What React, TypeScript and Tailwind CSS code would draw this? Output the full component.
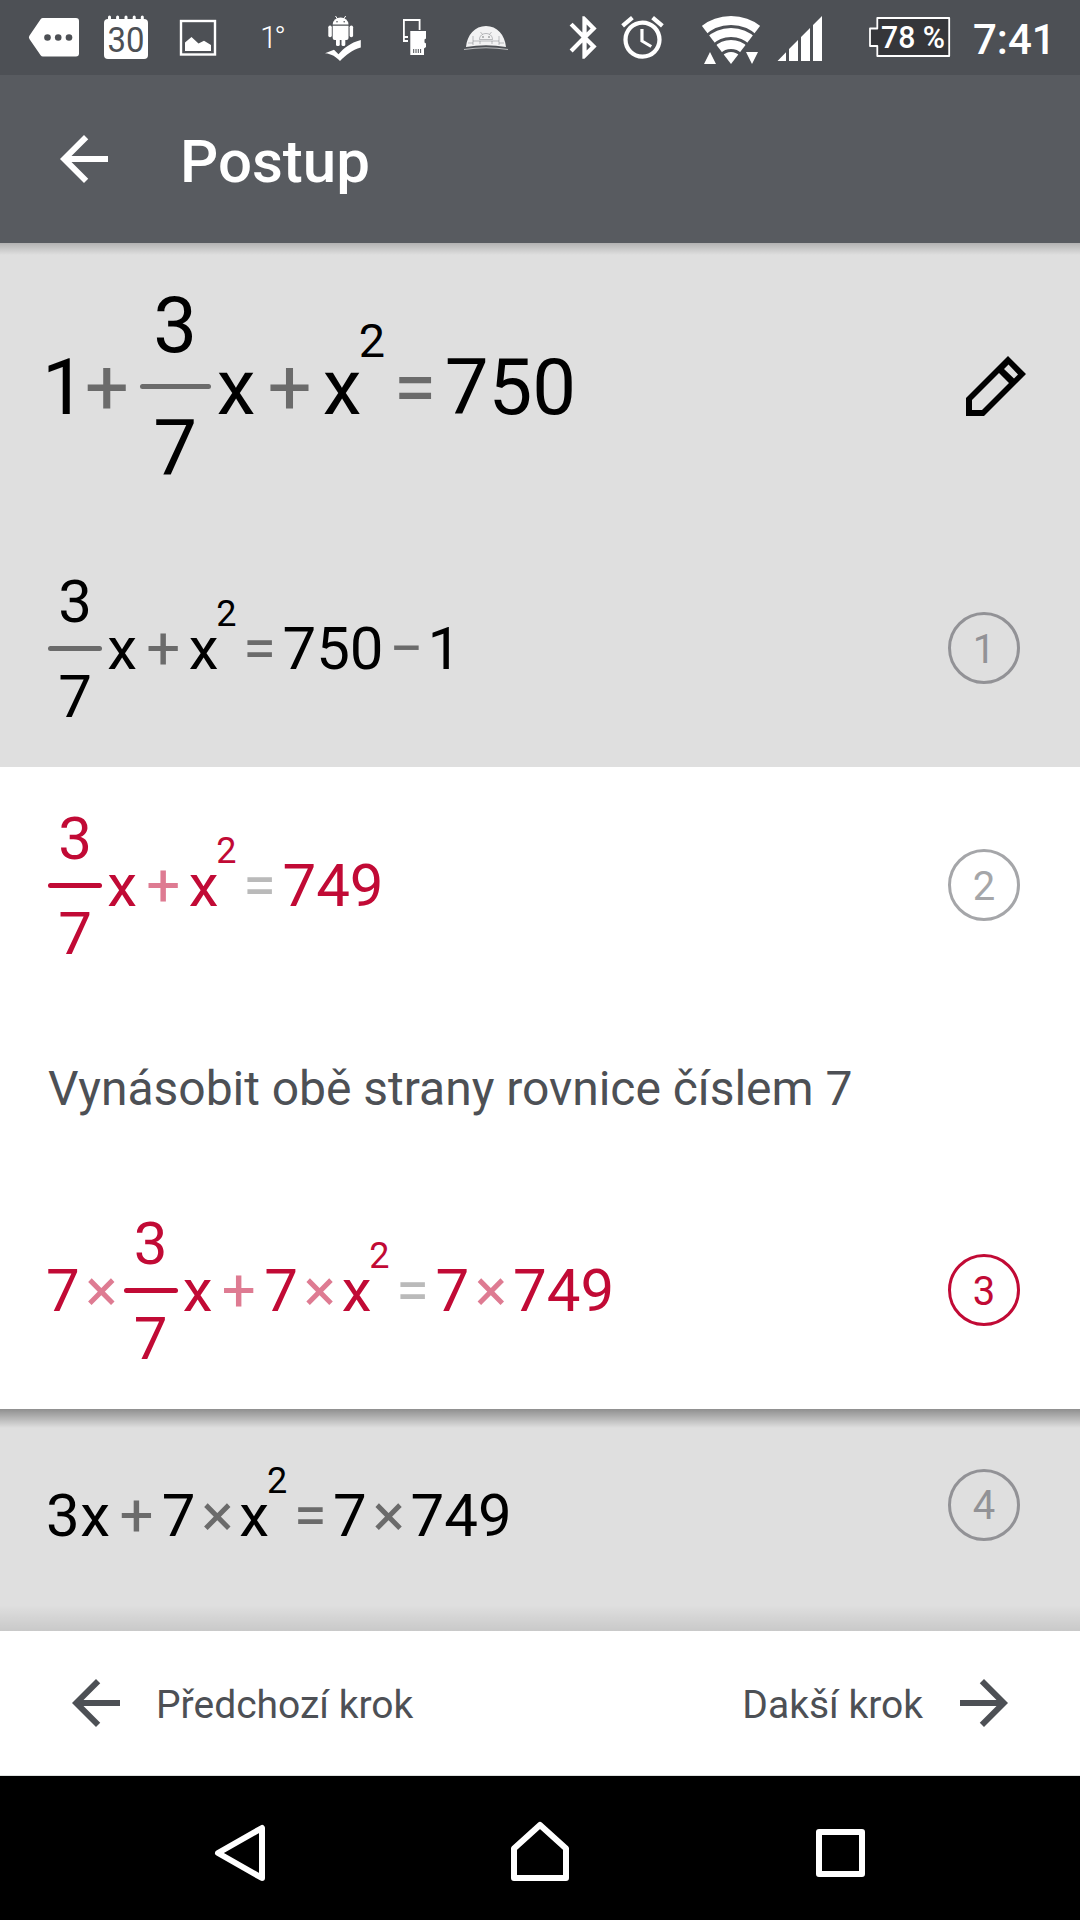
import React from 'react';
import { MdAlarm, MdArrowBack, MdArrowForward, MdBluetooth } from 'react-icons/md';
import { clsx } from 'clsx';

type Tone = 'muted' | 'active';

type Token =
  | { kind: 'text'; value: string; className?: string }
  | { kind: 'op'; value: '+' | '−' | '×' | '=' }
  | { kind: 'frac'; top: string; bottom: string }
  | { kind: 'sup'; value: string };

const EQUATIONS: Record<string, Token[]> = {
  problem: [
    { kind: 'text', value: '1', className: '-mr-[0.17em]' },
    { kind: 'op', value: '+' },
    { kind: 'frac', top: '3', bottom: '7' },
    { kind: 'text', value: 'x', className: 'ml-[0.08em]' },
    { kind: 'op', value: '+' },
    { kind: 'text', value: 'x' },
    { kind: 'sup', value: '2' },
    { kind: 'op', value: '=' },
    { kind: 'text', value: '750' },
  ],
  step1: [
    { kind: 'frac', top: '3', bottom: '7' },
    { kind: 'text', value: 'x', className: 'ml-[0.08em]' },
    { kind: 'op', value: '+' },
    { kind: 'text', value: 'x' },
    { kind: 'sup', value: '2' },
    { kind: 'op', value: '=' },
    { kind: 'text', value: '750' },
    { kind: 'op', value: '−' },
    { kind: 'text', value: '1' },
  ],
  step2: [
    { kind: 'frac', top: '3', bottom: '7' },
    { kind: 'text', value: 'x', className: 'ml-[0.08em]' },
    { kind: 'op', value: '+' },
    { kind: 'text', value: 'x' },
    { kind: 'sup', value: '2' },
    { kind: 'op', value: '=' },
    { kind: 'text', value: '749' },
  ],
  step3: [
    { kind: 'text', value: '7' },
    { kind: 'op', value: '×' },
    { kind: 'frac', top: '3', bottom: '7' },
    { kind: 'text', value: 'x', className: 'ml-[0.08em]' },
    { kind: 'op', value: '+' },
    { kind: 'text', value: '7' },
    { kind: 'op', value: '×' },
    { kind: 'text', value: 'x' },
    { kind: 'sup', value: '2' },
    { kind: 'op', value: '=' },
    { kind: 'text', value: '7' },
    { kind: 'op', value: '×' },
    { kind: 'text', value: '749' },
  ],
  step4: [
    { kind: 'text', value: '3' },
    { kind: 'text', value: 'x', className: 'ml-[0.01em]' },
    { kind: 'op', value: '+' },
    { kind: 'text', value: '7' },
    { kind: 'op', value: '×' },
    { kind: 'text', value: 'x' },
    { kind: 'sup', value: '2' },
    { kind: 'op', value: '=' },
    { kind: 'text', value: '7' },
    { kind: 'op', value: '×' },
    { kind: 'text', value: '749' },
  ],
};

const OP_SPACING = {
  '+': 'ml-[0.155em] mr-[0.14em]',
  '−': 'ml-[0.095em] mr-[0.065em]',
  '×': 'mx-[0.098em]',
  '=': 'mx-[0.108em]',
};

const Equation: React.FC<{ tokens: Token[]; tone?: Tone; className?: string }> = ({
  tokens,
  tone = 'muted',
  className,
}) => {
  const active = tone === 'active';
  return (
    <div
      className={clsx(
        'flex items-center leading-none whitespace-nowrap',
        active ? 'text-[#c10a35]' : 'text-black',
        className,
      )}
    >
      {tokens.map((token, i) => {
        if (token.kind === 'frac') {
          return (
            <div key={i} className="flex w-[0.907em] flex-col items-center gap-[0.2425em]">
              <span className="pt-[0.03em]">{token.top}</span>
              <span
                className={clsx('h-[0.07em] w-full rounded-full', active ? 'bg-[#c10a35]' : 'bg-[#6b6b6b]')}
              />
              <span className="pt-[0.03em]">{token.bottom}</span>
            </div>
          );
        }
        if (token.kind === 'sup') {
          return (
            <span key={i} className="-ml-[0.06em] pb-[1.914em] text-[0.6em] leading-none">
              {token.value}
            </span>
          );
        }
        if (token.kind === 'op') {
          return (
            <span
              key={i}
              className={clsx(
                'pt-[0.03em]',
                OP_SPACING[token.value],
                !active && 'text-[#6b6b6b]',
                active && (token.value === '=' ? 'text-[#bababa]' : 'text-[#de7b92]'),
              )}
            >
              {token.value}
            </span>
          );
        }
        return (
          <span key={i} className={clsx('pt-[0.03em]', token.className)}>
            {token.value}
          </span>
        );
      })}
    </div>
  );
};

const StepBadge: React.FC<{ n: number; className: string }> = ({ n, className }) => (
  <span
    className={clsx(
      'mb-px flex h-[72px] w-[72px] items-center justify-center rounded-full border-[3px] pt-[3px] text-[40px] leading-none',
      className,
    )}
  >
    {n}
  </span>
);

// Icons of the status bar share one vertical scale, so x is the only offset
const StatusIcon: React.FC<{ x: number; w: number; className: string; children: React.ReactNode }> = ({
  x,
  w,
  className,
  children,
}) => (
  <svg
    width={w}
    height={75}
    viewBox={`${x} 0 ${w} 75`}
    fill="#fff"
    className={clsx('shrink-0', className)}
  >
    {children}
  </svg>
);

const StatusBar = () => (
  <div className="flex h-[75px] items-center bg-[#4d5055] text-white">
    {/* Message */}
    <StatusIcon x={28} w={52} className="ml-[28px]">
      <path d="M43 18H76a3 3 0 0 1 3 3V53.5a3 3 0 0 1-3 3H43a3 3 0 0 1-2.4-1.3L29.4 39a3 3 0 0 1 0-3.2L40.6 19.3A3 3 0 0 1 43 18z" />
      <g fill="#4d5055">
        <circle cx="47.5" cy="37.5" r="3.3" />
        <circle cx="58.2" cy="37.5" r="3.3" />
        <circle cx="69" cy="37.5" r="3.3" />
      </g>
    </StatusIcon>

    {/* Calendar */}
    <StatusIcon x={103} w={46} className="ml-[23px]">
      <rect x="104" y="19" width="44" height="40" rx="4" />
      <path d="M109.5 17v4M117.6 17v4M126 17v4M134.2 17v4M142.3 17v4" stroke="#fff" strokeWidth="3" strokeLinecap="round" />
      <text x="107.5" y="51.5" fontFamily="Roboto, sans-serif" fontSize="35" textLength="37" lengthAdjust="spacingAndGlyphs" fill="#4d5055">
        30
      </text>
    </StatusIcon>

    {/* Picture */}
    <StatusIcon x={179} w={38} className="ml-[30px]">
      <rect x="181" y="21" width="34" height="33.5" fill="none" stroke="#fff" strokeWidth="2.4" />
      <path d="M185 51V42.5l6.5-5.500 7 6.500 5.500-2.800 7 4.300v6z" />
    </StatusIcon>

    <span className="ml-[43px] w-[32px] text-[31px] leading-none font-light tracking-[-3px]">1°</span>

    {/* Android update done */}
    <StatusIcon x={324} w={38} className="ml-[32px]">
      <path d="M332.7 24.5a7.9 7 0 0 1 15.8 0z" />
      <path d="M335.5 16l2 3M345.7 16l-2 3" stroke="#fff" strokeWidth="1" />
      <path d="M332.7 25.8h15.8V38a2 2 0 0 1-2 2h-11.8a2 2 0 0 1-2-2z" />
      <rect x="328.3" y="25.5" width="3.5" height="11.7" rx="1.7" />
      <rect x="349.6" y="25.5" width="3.5" height="11.7" rx="1.7" />
      <rect x="336" y="38" width="3.8" height="8" rx="1.6" />
      <rect x="341.5" y="38" width="3.8" height="8" rx="1.6" />
      <circle cx="337" cy="21.7" r=".8" fill="#4d5055" />
      <circle cx="344.2" cy="21.7" r=".8" fill="#4d5055" />
      <path d="M325 53.3l9-3.5 4.5 4.500C344 48 350 43 360.800 40v7.500C352 50 346 55 340 61c-4-4-8-7-15-7.700z" />
    </StatusIcon>

    {/* Phone with memory card */}
    <StatusIcon x={402} w={25} className="ml-[40px]">
      <path d="M403 19h17.5v11h-1.8v-9H404.8v15h3.2v2h-3.2v2h3.2v2h-5z" />
      <path d="M410.3 31H426v7.5l-1.5 1v3l1.5 1V47l-2 1.500V55h-13.700z" />
      <path d="M413.7 49v4M416 49v4M418.3 49v4M420.6 49v4" stroke="#4d5055" strokeWidth="1" />
    </StatusIcon>

    {/* Dome */}
    <StatusIcon x={463} w={46} className="ml-[36px]">
      <path d="M466 47c1-12 9-21 20-21s19 9 20 21q-20-3.5-40 0z" fillOpacity=".93" />
      <path d="M464 49.5q22-3.5 44 0" stroke="#fff" strokeOpacity=".6" strokeWidth="1.2" fill="none" />
      <g stroke="#4d5055" strokeOpacity=".5" strokeWidth=".7" fill="none">
        <path d="M479.500 39.500c0-8 13-8 13 0zM480.500 32l2 2.500M491.500 32l-2 2.500M473 36v9M499 36v9M473 41h26M468 43h5M499 43h5M480 41v3M492 41v3" />
      </g>
      <circle cx="483" cy="37" r=".7" fill="#4d5055" />
      <circle cx="489" cy="37" r=".7" fill="#4d5055" />
    </StatusIcon>

    <MdBluetooth className="ml-[50px] size-[51px] shrink-0" />
    <MdAlarm className="ml-[7px] size-[51px] shrink-0" />

    {/* Wi-Fi */}
    <StatusIcon x={701} w={60} className="ml-[33px]">
      <clipPath id="wifi">
        <path d="M731 64L694 15.5V0h74v15.5z" />
      </clipPath>
      <g clipPath="url(#wifi)" fill="none" stroke="#fff">
        <circle cx="731" cy="64" r="43.4" strokeWidth="9" />
        <circle cx="731" cy="64" r="31.6" strokeWidth="9" />
        <circle cx="731" cy="64" r="19.5" strokeWidth="9" />
        <circle cx="731" cy="64" r="6" strokeWidth="12" />
      </g>
      <path d="M710 52l6 12h-12zM746 52h12l-6 12z" />
    </StatusIcon>

    {/* Signal */}
    <StatusIcon x={777} w={46} className="ml-[16px]">
      <path d="M777.5 61l8.5-8.7V61zM789 61V49l9-9v21zM801 61V37l9-9v33zM813 61V25l9-9v45z" />
    </StatusIcon>

    {/* Battery */}
    <StatusIcon x={868} w={83} className="ml-[45px]">
      <path d="M877.3 18H949.2V56H877.3V46H870V28.5h7.3z" fill="#35363a" stroke="#fff" strokeWidth="1.8" strokeLinejoin="round" />
      <text x="881" y="48" fontFamily="Roboto, sans-serif" fontWeight="500" fontSize="31" textLength="64" lengthAdjust="spacingAndGlyphs">
        78 %
      </text>
    </StatusIcon>

    <span className="ml-[22px] pt-[4px] text-[42px] leading-none font-medium">7:41</span>
  </div>
);

const PencilIcon = () => (
  <svg viewBox="0 0 60 60" className="mb-px size-[60px]">
    <path
      fillRule="evenodd"
      d="M0 60V42L42 0l18 18L18 60zM6 54h10L43 27 33 17 6 44zM38 13l10 9.500 4-4L42.500 8.500z"
    />
  </svg>
);

const NavBar = () => (
  <div className="grid h-[144px] grid-cols-3 items-center justify-items-center bg-black px-[90px]">
    {['M58 16v50L14 41z', 'M10 66V36.5L36 13l26 23.5V66z', 'M15 20h43v42H15z'].map((d) => (
      <svg
        key={d}
        viewBox="0 0 72 72"
        fill="none"
        stroke="#fff"
        strokeWidth="6"
        strokeLinejoin="round"
        className="size-[72px]"
      >
        <path d={d} />
      </svg>
    ))}
  </div>
);

const App: React.FC = () => (
  <div className="flex h-[1920px] w-[1080px] flex-col overflow-hidden bg-[#dfdfdf] font-[Roboto,sans-serif]">
    <StatusBar />

    <header className="flex h-[168px] items-center bg-[#585b60] pl-[48px] text-white">
      <MdArrowBack className="size-[72px]" />
      <h1 className="ml-[60px] pt-[5px] text-[60px] leading-none font-medium">Postup</h1>
    </header>

    <section className="relative">
      <div className="absolute inset-x-0 top-0 h-[12px] bg-linear-to-b from-black/20 to-transparent" />
      <div className="flex h-[287px] items-center justify-between pr-[54px] pl-[42px]">
        <Equation tokens={EQUATIONS.problem} className="text-[78px]" />
        <PencilIcon />
      </div>
      <div className="flex h-[237px] items-center justify-between pr-[60px] pl-[48px]">
        <Equation tokens={EQUATIONS.step1} className="text-[60px]" />
        <StepBadge n={1} className="border-[#929296] text-[#929296]" />
      </div>
    </section>

    {/* Expanded step */}
    <section className="bg-white">
      <div className="flex h-[237px] items-center justify-between pr-[60px] pl-[48px]">
        <Equation tokens={EQUATIONS.step2} tone="active" className="text-[60px]" />
        <StepBadge n={2} className="border-[#a5a6a9] text-[#a5a6a9]" />
      </div>
      <p className="flex h-[168px] items-center pt-[2px] pl-[48px] text-[48px] leading-none tracking-[-0.025px] text-[#4d5055]">
        Vynásobit obě strany rovnice číslem 7
      </p>
      <div className="flex h-[237px] items-center justify-between pr-[60px] pl-[46px]">
        <Equation tokens={EQUATIONS.step3} tone="active" className="text-[60px]" />
        <StepBadge n={3} className="border-[#c10a35] text-[#c10a35]" />
      </div>
    </section>

    <section className="relative h-[222px]">
      <div className="absolute inset-x-0 top-0 h-[19px] bg-linear-to-b from-black/36 to-transparent" />
      <div className="flex h-[192px] items-center justify-between pr-[60px] pl-[46px]">
        <Equation tokens={EQUATIONS.step4} className="pt-[20px] text-[60px]" />
        <StepBadge n={4} className="border-[#929296] text-[#929296]" />
      </div>
      <div className="absolute inset-x-0 bottom-0 h-[26px] bg-linear-to-t from-black/10 to-transparent" />
    </section>

    <footer className="flex h-[145px] items-center justify-between border-b border-[#dfe3e1] bg-white px-[60px] text-[39px] leading-none text-[#4d5055]">
      <button className="flex items-center gap-[24px]">
        <MdArrowBack className="size-[72px]" />
        <span className="pt-[5px]">Předchozí krok</span>
      </button>
      <button className="flex items-center gap-[25px]">
        <span className="pt-[5px]">Dakší krok</span>
        <MdArrowForward className="size-[72px]" />
      </button>
    </footer>

    <NavBar />
  </div>
);

export default App;
